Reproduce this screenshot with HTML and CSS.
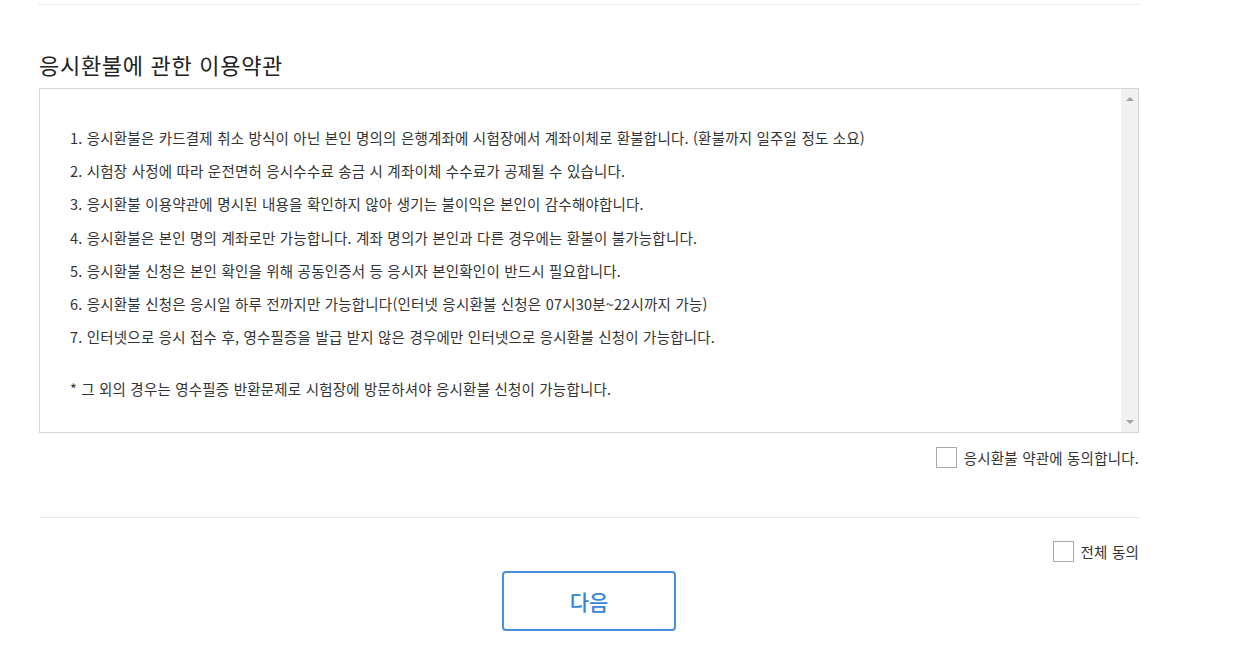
FILE: index.html
```html
<!DOCTYPE html>
<html lang="ko">
<head>
    <meta charset="UTF-8">
    <meta name="viewport" content="width=device-width, initial-scale=1.0">
    <title>응시환불 이용약관</title>
    <link rel="stylesheet" href="styles.css">
</head>
<body>
    <div class="wrap">
        <div class="top-line"></div>

        <h2 class="title">응시환불에 관한 이용약관</h2>

        <div class="terms-box">
            <div class="terms-text">
                <ol class="terms-list">
                    <li>1. 응시환불은 카드결제 취소 방식이 아닌 본인 명의의 은행계좌에 시험장에서 계좌이체로 환불합니다. (환불까지 일주일 정도 소요)</li>
                    <li>2. 시험장 사정에 따라 운전면허 응시수수료 송금 시 계좌이체 수수료가 공제될 수 있습니다.</li>
                    <li>3. 응시환불 이용약관에 명시된 내용을 확인하지 않아 생기는 불이익은 본인이 감수해야합니다.</li>
                    <li>4. 응시환불은 본인 명의 계좌로만 가능합니다. 계좌 명의가 본인과 다른 경우에는 환불이 불가능합니다.</li>
                    <li>5. 응시환불 신청은 본인 확인을 위해 공동인증서 등 응시자 본인확인이 반드시 필요합니다.</li>
                    <li>6. 응시환불 신청은 응시일 하루 전까지만 가능합니다(인터넷 응시환불 신청은 07시30분~22시까지 가능)</li>
                    <li>7. 인터넷으로 응시 접수 후, 영수필증을 발급 받지 않은 경우에만 인터넷으로 응시환불 신청이 가능합니다.</li>
                </ol>
                <p class="terms-note">* 그 외의 경우는 영수필증 반환문제로 시험장에 방문하셔야 응시환불 신청이 가능합니다.</p>
            </div>
            <div class="scrollbar">
                <span class="arrow arrow-up"></span>
                <span class="arrow arrow-down"></span>
            </div>
        </div>

        <div class="agree-row">
            <label class="check-label">
                <input type="checkbox" id="agreeTerms">
                <span class="check-box"></span>
                응시환불 약관에 동의합니다.
            </label>
        </div>

        <div class="divider"></div>

        <div class="agree-all">
            <label class="check-label">
                <input type="checkbox" id="agreeAll">
                <span class="check-box"></span>
                전체 동의
            </label>
        </div>

        <div class="btn-area">
            <button type="button" class="btn-next">다음</button>
        </div>
    </div>
</body>
</html>
```

FILE: styles.css
```css
body {
    margin: 0;
    background-color: #fff;
    color: #333;
    font-family: "Noto Sans CJK KR", "Noto Sans", sans-serif;
}
.wrap {
    width: 1100px;
    margin-left: 39px;
    padding-top: 4px;
}
.top-line {
    border-top: 1px dotted #ddd;
}
.title {
    margin: 35px 0 0;
    font-size: 22px;
    font-weight: normal;
    line-height: 48px;
    color: #222;
    letter-spacing: 0.7px;
}
.terms-box {
    display: flex;
    height: 343px;
    border: 1px solid #d6d6d6;
}
.terms-text {
    flex: 1;
    padding: 32px 0 0 30px;
    font-size: 14.5px;
    letter-spacing: 0.2px;
    color: #333;
}
.terms-list {
    list-style: none;
    margin: 0;
    padding: 0;
}
.terms-list li {
    line-height: 33.2px;
}
.terms-note {
    margin: 19px 0 0;
    line-height: 33px;
}
.scrollbar {
    width: 17px;
    background-color: #f1f1f1;
    display: flex;
    flex-direction: column;
    justify-content: space-between;
    align-items: center;
    padding: 8px 0;
}
.arrow {
    width: 0;
    height: 0;
    border-left: 4px solid transparent;
    border-right: 4px solid transparent;
}
.arrow-up {
    border-bottom: 4px solid #a3a3a3;
}
.arrow-down {
    border-top: 4px solid #a3a3a3;
}
.agree-row {
    display: flex;
    justify-content: flex-end;
    margin-top: 14px;
}
.check-label {
    display: flex;
    align-items: center;
    font-size: 14.5px;
    letter-spacing: 0.2px;
    color: #333;
    cursor: pointer;
}
.check-label input {
    display: none;
}
.check-box {
    width: 19px;
    height: 19px;
    border: 1px solid #aaa;
    background-color: #fff;
    margin-right: 7px;
}
.divider {
    margin-top: 49px;
    border-top: 1px solid #e6e6e6;
}
.agree-all {
    display: flex;
    justify-content: flex-end;
    margin-top: 23px;
}
.btn-area {
    display: flex;
    justify-content: center;
    margin-top: 9px;
}
.btn-next {
    width: 174px;
    height: 60px;
    background-color: #fff;
    border: 2px solid #4a8fd9;
    border-radius: 4px;
    color: #3a86d6;
    font-family: inherit;
    font-size: 21px;
    font-weight: 500;
    cursor: pointer;
}
```
